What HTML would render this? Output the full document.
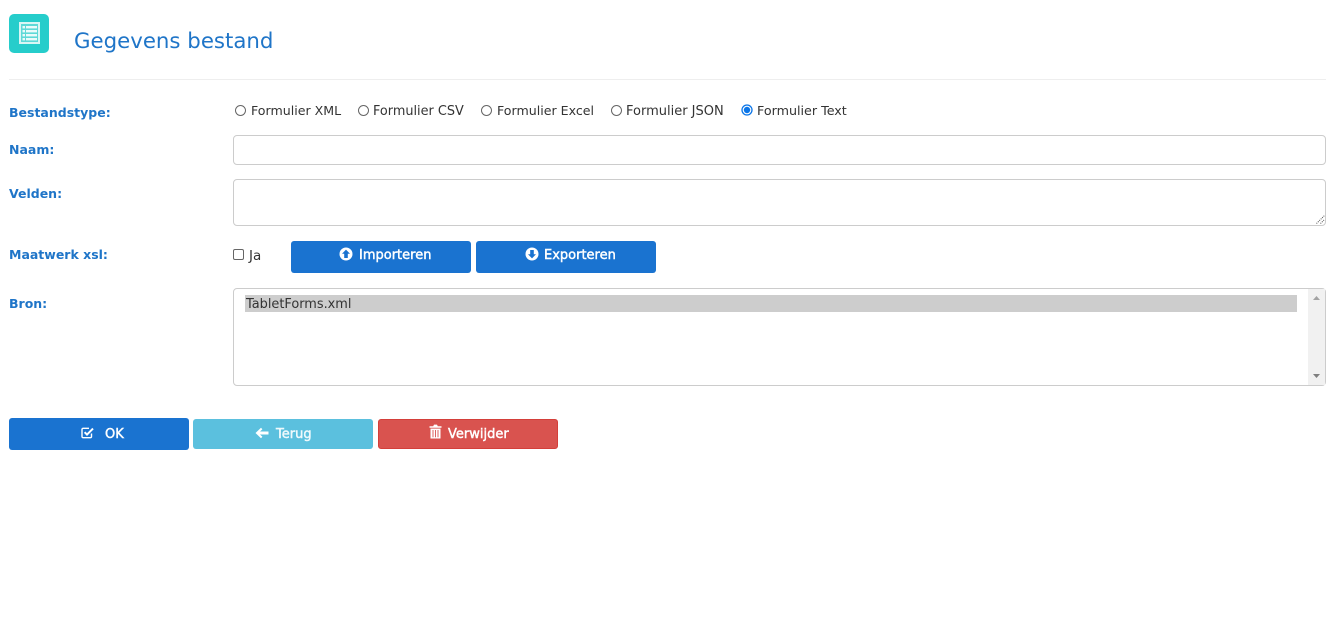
<!DOCTYPE html>
<html><head><meta charset="utf-8"><style>
html,body{margin:0;padding:0;background:#fff;width:1340px;height:630px;overflow:hidden}
body{position:relative;font-family:"DejaVu Sans","Liberation Sans",sans-serif;color:#333}
.a{position:absolute;white-space:nowrap}
.lbl{position:absolute;left:9px;font-size:12.5px;font-weight:bold;color:#1f75c8;line-height:16px;white-space:nowrap}
.opt{position:absolute;top:103px;font-size:12.7px;line-height:16px;color:#333;white-space:nowrap}
.r{position:absolute;top:105px;width:9px;height:9px;border:1px solid #666;border-radius:50%;background:#fff}
.box{position:absolute;left:233px;width:1091px;border:1px solid #ccc;border-radius:4px;background:#fff}
.btn{position:absolute;height:32px;width:180px;border-radius:3px;box-sizing:border-box}
.t{position:absolute;color:#fff;font-size:13px;line-height:16px;white-space:nowrap;-webkit-text-stroke:.45px #fff}
</style></head><body>
<div class="a" style="left:9px;top:14px;width:40px;height:39px;background:#26cdcb;border-radius:5px"></div>
<svg class="a" style="left:19px;top:22px" width="21" height="22" viewBox="0 0 21 22"><rect x="0" y="0" width="21" height="22" fill="#d9f6f5"/><rect x="2" y="2" width="17" height="18" fill="#5ed9d7"/><g fill="#eafbfa"><rect x="3.5" y="4" width="2.5" height="2.4"/><rect x="7" y="4" width="11" height="2.4"/><rect x="3.5" y="8" width="2.5" height="2.4"/><rect x="7" y="8" width="11" height="2.4"/><rect x="3.5" y="12" width="2.5" height="2.4"/><rect x="7" y="12" width="11" height="2.4"/><rect x="3.5" y="16" width="2.5" height="2.4"/><rect x="7" y="16" width="11" height="2.4"/></g></svg>
<div class="a" style="left:74px;top:29px;font-size:21.3px;line-height:26px;color:#1f75c8">Gegevens bestand</div>
<div class="a" style="left:9px;top:79px;width:1317px;height:1px;background:#eee"></div>

<div class="lbl" style="top:105px">Bestandstype:</div>
<div class="r" style="left:235px"></div><div class="opt" style="left:251px;font-size:12.6px">Formulier XML</div>
<div class="r" style="left:358px"></div><div class="opt" style="left:373px;top:104px;font-size:12.85px">Formulier CSV</div>
<div class="r" style="left:481px"></div><div class="opt" style="left:497px;font-size:12.6px">Formulier Excel</div>
<div class="r" style="left:611px"></div><div class="opt" style="left:626px;top:104px;font-size:13px">Formulier JSON</div>
<svg class="a" style="left:741px;top:104px" width="12" height="12"><circle cx="6" cy="6" r="5" fill="#fff" stroke="#0a75e8" stroke-width="1.3"/><circle cx="6" cy="6" r="3.2" fill="#0a75e8"/></svg>
<div class="opt" style="left:757px">Formulier Text</div>

<div class="lbl" style="top:142px">Naam:</div>
<div class="box" style="top:135px;height:28px"></div>

<div class="lbl" style="top:186px">Velden:</div>
<div class="box" style="top:179px;height:45px"></div>
<svg class="a" style="left:1316px;top:215px" width="9" height="9"><path d="M0.5 8.5L8.5 0.5M4.5 8.5L8.5 4.5" stroke="#555" stroke-width="1" stroke-dasharray="1 1" fill="none"/></svg>

<div class="lbl" style="top:247px">Maatwerk xsl:</div>
<div class="a" style="left:233px;top:249px;width:9px;height:9px;border:1px solid #666;border-radius:2px;background:#fff"></div>
<div class="a" style="left:249px;top:248px;font-size:13.5px;line-height:16px">Ja</div>

<div class="btn" style="left:291px;top:241px;background:#1a73d0"><svg class="a" style="left:48px;top:6px" width="14" height="14" viewBox="0 0 14 14"><circle cx="7" cy="7" r="6.5" fill="#fff"/><path d="M7 2.6L11 6.8H8.8V11H5.2V6.8H3Z" fill="#1a73d0"/></svg><div class="t" style="left:68px;top:7px">Importeren</div></div>
<div class="btn" style="left:476px;top:241px;background:#1a73d0"><svg class="a" style="left:49px;top:6px" width="14" height="14" viewBox="0 0 14 14"><circle cx="7" cy="7" r="6.5" fill="#fff"/><path d="M7 11.4L11 7.2H8.8V3H5.2V7.2H3Z" fill="#1a73d0"/></svg><div class="t" style="left:68px;top:7px">Exporteren</div></div>

<div class="lbl" style="top:296px">Bron:</div>
<div class="box" style="top:288px;height:96px"></div>
<div class="a" style="left:245px;top:295px;width:1052px;height:17px;background:#cdcdcd"></div>
<div class="a" style="left:246px;top:296px;font-size:12.9px;line-height:18px;color:#333">TabletForms.xml</div>
<div class="a" style="left:1308px;top:289px;width:17px;height:96px;background:#f1f1f1"></div>
<svg class="a" style="left:1308px;top:289px" width="17" height="96"><path d="M5 11L8.5 7L12 11Z" fill="#a3a3a3"/><path d="M5 85L8.5 89L12 85Z" fill="#7f7f7f"/></svg>

<div class="btn" style="left:9px;top:418px;background:#1a73d0"><svg class="a" style="left:72px;top:9px" width="14" height="12" viewBox="0 0 14 12"><path d="M10.5 6.5V9.5Q10.5 10.7 9.3 10.7H2.2Q1 10.7 1 9.5V2.5Q1 1.3 2.2 1.3H8" fill="none" stroke="#fff" stroke-width="1.4"/><path d="M3.6 5.2L6 7.6L12 1.6" fill="none" stroke="#fff" stroke-width="2"/></svg><div class="t" style="left:96px;top:9px">OK</div></div>
<div class="btn" style="left:193px;top:419px;height:30px;background:#5bc0de"><svg class="a" style="left:62px;top:8px" width="14" height="12" viewBox="0 0 14 12"><path d="M0.5 6L6 0.8L7.4 2.2L5 4.5H13.5V7.5H5L7.4 9.8L6 11.2Z" fill="#fff"/></svg><div class="t" style="left:83px;top:8px;color:#eef9fc;-webkit-text-stroke-color:#eef9fc">Terug</div></div>
<div class="btn" style="left:378px;top:419px;height:30px;background:#d9534f;border:1px solid #d43f3a"><svg class="a" style="left:50px;top:4px" width="13" height="15" viewBox="0 0 13 15"><path d="M0.5 2.2H4.2L5 0.6H8L8.8 2.2H12.5V3.8H0.5Z" fill="#fff"/><path d="M1.5 4.6H11.5V14.5H1.5Z" fill="#fff"/><path d="M4 6V13.2M6.5 6V13.2M9 6V13.2" stroke="#d9534f" stroke-width="0.9"/></svg><div class="t" style="left:69px;top:7px">Verwijder</div></div>
</body></html>
